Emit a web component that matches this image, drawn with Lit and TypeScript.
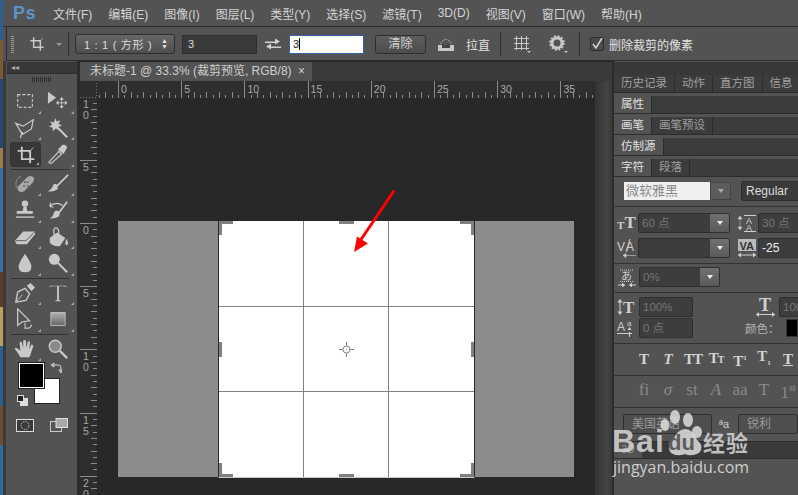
import { LitElement, html, css, svg } from "lit";
import { customElement } from "lit/decorators.js";

const MENU = ["文件(F)","编辑(E)","图像(I)","图层(L)","类型(Y)","选择(S)","滤镜(T)","3D(D)","视图(V)","窗口(W)","帮助(H)"];
const G = "#c9c9c9";
const ic: Record<string, any> = {
  marquee: svg`<rect x="4" y="5" width="16" height="14" fill="none" stroke="${G}" stroke-width="1.2" stroke-dasharray="3.200 2"/>`,
  move: svg`<path d="M1 2 L1 15 L10 8.500Z" fill="${G}"/><path d="M10 14h12M16 8v12" stroke="${G}" stroke-width="1"/><path d="M10 14l2.500-2.500v5zM22 14l-2.500-2.500v5zM16 8l-2.500 2.500h5zM16 20l-2.500-2.500h5z" fill="${G}"/>`,
  lasso: svg`<path d="M2 7 L10 10 L21 3 L19 13 L9 19 Z" fill="none" stroke="${G}" stroke-width="1.300"/><path d="M8 16 Q11 18 8 19 L7 23" fill="none" stroke="${G}" stroke-width="1.300"/>`,
  wand: svg`<path d="M12 12 L22 22" stroke="${G}" stroke-width="2.200"/><path d="M9 1l1.500 4 4-1.500-2 4 4 1.500-4 1.500 1 4-4-2-3 3-.5-4-4-1 3.500-2-2-4 4 1.500z" fill="${G}"/>`,
  crop: svg`<path d="M7 2v15h15M2 7h15v15" fill="none" stroke="${G}" stroke-width="2.200"/><path d="M15 9l6-6" stroke="${G}" stroke-width="1"/>`,
  dropper: svg`<path d="M3 22 L2 21 L13 9 L16 12 L5 22Z" fill="none" stroke="${G}" stroke-width="1.300"/><path d="M12 7 L17 2 Q21 1 22 5 L18 12Z" fill="${G}"/>`,
  heal: svg`<path d="M8 21 Q3 20 4 15 L15 4 Q20 2 22 6 Q22 9 20 11 L11 20Z" fill="#a8a8a8"/><path d="M7 4 Q0 8 3 17" stroke="${G}" stroke-dasharray="1.500 1.500" fill="none"/><circle cx="11" cy="14" r="1" fill="#555"/><circle cx="15" cy="10" r="1" fill="#555"/><circle cx="12" cy="10" r="1" fill="#555"/><circle cx="15" cy="14" r="1" fill="#555"/>`,
  brush: svg`<path d="M23 2 L11 14" stroke="${G}" stroke-width="1.800"/><path d="M10 12 Q13 15 11 18 Q7 21 1 20 Q5 18 6 15 Q7 11 10 12Z" fill="${G}"/>`,
  stamp: svg`<circle cx="12" cy="5" r="3.500" fill="${G}"/><path d="M10.500 8h3l1 5h6v3H3v-3h6.500z" fill="${G}"/><path d="M2 19h20v1.500H2z" fill="${G}"/>`,
  history: svg`<path d="M22 3 L13 15" stroke="${G}" stroke-width="2"/><path d="M12 13 Q15 15 13 19 Q8 22 3 21 Q7 19 7 16 Q9 11 12 13Z" fill="${G}"/><path d="M3 8 Q10 2 17 7M3 8l1-4M3 8l4 1" fill="none" stroke="${G}" stroke-width="1.400"/>`,
  eraser: svg`<path d="M1 16 L10 6 H23 L23 9 L14 20 H3Z" fill="${G}"/><path d="M2 16 H13 L23 6" stroke="#555" fill="none"/>`,
  bucket: svg`<path d="M3 13 L11 7 L20 13 L14 22 Q7 23 3 18Z" fill="${G}"/><path d="M8 10 Q6 2 10 2 Q13 2 13 9" fill="none" stroke="${G}" stroke-width="1.400"/><path d="M21 14 Q25 20 21 21 Q19 20 21 14Z" fill="${G}"/>`,
  drop: svg`<path d="M12 2 Q5 12 5 16 Q5 22 12 22 Q19 22 19 16 Q19 12 12 2Z" fill="${G}"/>`,
  smudge: svg`<circle cx="8" cy="8" r="6" fill="${G}"/><path d="M12 12 L22 22" stroke="${G}" stroke-width="2.200"/>`,
  pen: svg`<path d="M2 22 L4 11 L12 7 L17 13 L13 20Z" fill="none" stroke="${G}" stroke-width="1.500"/><path d="M2 22 L9 14" stroke="${G}"/><path d="M14 4 L18 1 L23 6 L19 10Z" fill="${G}"/>`,
  path: svg`<path d="M4 1 L4 19 L9 15 L17 14Z" fill="none" stroke="${G}" stroke-width="1.400"/><path d="M12 16 v6 h4 q3-1 3-4" fill="none" stroke="${G}" stroke-width="1.200"/>`,
  rect: svg`<defs><linearGradient id="rg" x1="0" y1="0" x2="0" y2="1"><stop offset="0" stop-color="#b0b0b0"/><stop offset="1" stop-color="#666"/></linearGradient></defs><rect x="2.500" y="3.500" width="19" height="17" fill="url(#rg)" stroke="#d0d0d0"/>`,
  hand: svg`<path d="M7 21 Q5 17 1 12 Q1 10 3 11 L7 14 L6 5 Q7 3 8.500 5 L10 11 L10 3 Q12 1.500 13 3 L13.500 11 L15 4 Q17 3 17.500 5 L16.500 12 L19 7 Q21 7 21 9 L18 18 L17 21Z" fill="${G}"/>`,
  zoom: svg`<circle cx="9" cy="9" r="6.500" fill="#8a8a8a" stroke="${G}" stroke-width="1.500"/><path d="M14 14 L22 22" stroke="${G}" stroke-width="2.500"/>`,
  T: svg`<path d="M3 4h18v1.500h-.5q-1-1-2-1H13V19.500l2 .8V21H9v-.7l2-.8V4.500H5.500q-1 0-2 1H3z" fill="${G}"/>`,
};
const icon = (n: string, s = 22) => html`<svg width="${s}" height="${s}" viewBox="0 0 24 24">${ic[n]}</svg>`;
const fa = (body: any) => html`<svg class="fico" width="20" height="20" viewBox="0 0 20 20">${body}</svg>`;
const L = "#cfcfcf";
const FI = {
  size: svg`<text x="0" y="16" class="ft" font-size="11">T</text><text x="7.500" y="15" class="ft" font-size="17">T</text>`,
  lead: svg`<path d="M7 2.500h12M7 18.500h12" stroke="${L}"/><path d="M3 4v11M3 3l-2 3h4zM3 17l-2-3h4z" fill="${L}" stroke="${L}" stroke-width=".5"/><text x="9" y="10.500" class="fs" font-size="9">A</text><text x="9" y="18" class="fs" font-size="9">A</text>`,
  kern: svg`<text x="0" y="13" class="fs" font-size="12">V</text><text x="9" y="13" class="fs" font-size="12">A</text><path d="M9 14 L13 1" stroke="${L}"/><path d="M6 17.500h13M6 17.500l3-2v4z" fill="${L}" stroke="${L}" stroke-width=".6"/>`,
  track: svg`<rect x="1" y="1" width="18" height="12" fill="#bbb"/><text x="2.500" y="11.500" class="fsd" font-size="11">VA</text><path d="M1 17h18" stroke="${L}"/><path d="M1 17l3-2.500v5zM19 17l-3-2.500v5z" fill="${L}"/>`,
  tsume: svg`<path d="M3 3h14M3 14.500h14" stroke="${L}" stroke-dasharray="1 1"/><text x="4" y="13" class="fs" font-size="11">あ</text><path d="M1 18h7M12 18h7" stroke="${L}"/><path d="M8 18l-3-2.500v5zM12 18l3-2.500v5z" fill="${L}"/>`,
  vscale: svg`<text x="6" y="16" class="ft" font-size="17">T</text><path d="M3 3v14" stroke="${L}"/><path d="M3 2l-2.500 3.500h5zM3 18l-2.500-3.500h5z" fill="${L}"/>`,
  base: svg`<text x="0" y="13" class="fs" font-size="12">A</text><text x="10" y="8" class="fs" font-size="8">a</text><path d="M0 15.500h15" stroke="${L}"/><path d="M12.500 19v-5" stroke="${L}"/><path d="M10.500 12h4l-2-3z" fill="${L}"/>`,
  hscale: svg`<text x="3" y="14" class="ft" font-size="18">T</text><path d="M0 17.500h19" stroke="${L}"/><path d="M0 17.500l3-2.500v5zM19 17.500l-3-2.500v5z" fill="${L}"/>`,
};

const HT = [0,5,10,15,20,25,30,35];
const VT: [number,string][] = [[-10,"10"],[-5,"5"],[0,"0"],[5,"5"],[10,"10"],[15,"15"],[20,"20"]];
const U = 12.64;

function hRuler() {
  const t: any[] = [];
  for (let k = 0; k < 90; k++) {
    const x = Math.round(38 + (k - 4) * U / 2) + .5;
    if (x <= 17 || x > 514) continue;
    const m = k - 4;
    if (m % 10 === 0) t.push(svg`<line x1="${x}" x2="${x}" y1="0" y2="17" stroke="#8a8a8a"/>`);
    else t.push(svg`<line x1="${x}" x2="${x}" y1="${m % 2 ? 14 : 11}" y2="17" stroke="#8a8a8a"/>`);
  }
  return svg`${t}${HT.map(n => svg`<text x="${38 + n * U + 3}" y="12" class="rt">${n}</text>`)}
    <path d="M0 16.500h16.500V0" fill="none" stroke="#777" stroke-dasharray="1 2"/>`;
}
function vRuler() {
  const t: any[] = [];
  for (let i = -70; i < 210; i++) {
    const y = Math.round(125 + i * U / 2) + .5;
    if (y < 0 || y > 400) continue;
    if (i % 10 === 0) t.push(svg`<line x1="0" x2="17" y1="${y}" y2="${y}" stroke="#8a8a8a"/>`);
    else t.push(svg`<line x1="${i % 2 ? 13 : 11}" x2="17" y1="${y}" y2="${y}" stroke="#8a8a8a"/>`);
  }
  const labels = VT.map(([u, s]) => {
    const y = 125 + u * U;
    return [...s].map((c, k) => svg`<text x="3" y="${y + 11 + k * 11}" class="rt">${c}</text>`);
  });
  return svg`${t}${labels}`;
}

@customElement("app-root")
export class AppRoot extends LitElement {
  static styles = css`
    :host { display: block; width: 798px; height: 495px; overflow: hidden; position: relative; background: #535353;
      font-family: "Liberation Sans", "Noto Sans CJK SC", sans-serif; color: #d0d0d0; font-size: 12px; }
    * { box-sizing: border-box; }
    .strip { position: absolute; left: 0; top: 0; bottom: 0; width: 3px; z-index: 2;
      background: linear-gradient(#2b5f8f 0 8%, #7a5a36 8% 16%, #23496e 16% 30%, #9a7a4a 30% 34%, #3a6ea0 34% 55%, #5d3b24 55% 62%, #b7a060 62% 70%, #2b5f8f 70% 82%, #704a2a 82% 90%, #326a9e 90%); }
    .app { display: flex; flex-direction: column; height: 100%; padding-left: 3px; }
    .menu { height: 27px; display: flex; align-items: center; border-bottom: 1px solid #2c2c2c; flex: none; }
    .ps { font: bold 18px "Liberation Sans", sans-serif; color: #5e93c9; width: 50px; padding-left: 10px; letter-spacing: .5px; }
    .menu span.m { font-size: 12px; margin-right: 16px; white-space: nowrap; color: #d4d4d4; }
    .opts { height: 34px; flex: none; display: flex; align-items: center; margin-left: 3px; border-bottom: 1px solid #2c2c2c; border-left: 1px solid #2c2c2c; position: relative; padding-top: 1px; }
    .grip { width: 3px; height: 17px; margin-left: 4px; background: repeating-linear-gradient(#999 0 1px, transparent 1px 2px); flex: none; }
    .caret { width: 0; height: 0; border-left: 3px solid transparent; border-right: 3px solid transparent; border-top: 3px solid #9a9a9a; flex: none; }
    .vsep { width: 1px; height: 24px; background: #333; flex: none; }
    .sel { width: 100px; height: 20px; background: linear-gradient(#666, #4e4e4e); border: 1px solid #2e2e2e; border-radius: 3px; display: flex; align-items: center; justify-content: space-between; padding: 0 6px 0 8px; font-size: 11px; letter-spacing: .7px; flex: none; color: #ddd; }
    .updown { font-size: 7px; line-height: 6px; display: flex; flex-direction: column; letter-spacing: 0; }
    .inp { width: 75px; height: 19px; background: #3a3a3a; border: 1px solid #2e2e2e; padding-left: 5px; line-height: 17px; font-size: 11px; flex: none; color: #ddd; }
    .inp.on { background: #fff; border: 1px solid #3660b0; color: #222; padding-left: 3px; }
    .cursor { border-right: 1px solid #000; padding-right: 0; }
    .btn { width: 51px; height: 19px; background: linear-gradient(#5e5e5e, #4c4c4c); border: 1px solid #2e2e2e; border-radius: 3px; text-align: center; line-height: 17px; font-size: 12px; flex: none; }
    .check { width: 14px; height: 14px; background: #4a4a4a; border: 1px solid #2e2e2e; border-radius: 2px; flex: none; display: flex; }
    .label { font-size: 12px; white-space: nowrap; color: #e2e2e2; }
    .main { flex: 1; display: flex; min-height: 0; position: relative; }
    .tools { width: 77px; border-left: 3px solid #3a3a3a; border-right: 3px solid #2c2c2c; flex: none; display: flex; flex-direction: column; background: #535353; padding-left: 1px; }
    .thead { height: 12px; background: #383838; margin-top: 1px; font-size: 8px; color: #aaa; padding-left: 4px; line-height: 11px; border-bottom: 1px solid #2c2c2c; flex: none; }
    .tgrip { width: 19px; height: 5px; margin: 3px 0 6px 25px; background: repeating-linear-gradient(90deg, #2e2e2e 0 1px, transparent 1px 2px); flex: none; }
    .tg { display: grid; grid-template-columns: 33.500px 33.500px; padding-left: 1px; grid-auto-rows: 26.500px; flex: none; }
    .t { display: flex; align-items: center; justify-content: center; position: relative; }
    .t.sel-t { background: #383838; border-radius: 3px; width: 31px; height: 25px; margin: 1px 0 0 2px; border: 1px solid #333; }
    .t::after { content: ""; position: absolute; right: 1px; bottom: 1px; width: 0; height: 0; border-left: 3px solid transparent; border-bottom: 3px solid #a8a8a8; }
    .t.nc::after { display: none; }
    .tsep { height: 1px; background: #333; margin: 1px 8px 1px 4px; flex: none; }
    .colors { position: relative; height: 50px; flex: none; }
    .fg, .bg { position: absolute; }
    .bg { left: 27px; top: 16px; width: 26px; height: 26px; background: #fff; border: 1px solid #222; }
    .fg { left: 12px; top: 1px; width: 25px; height: 25px; background: #000; border: 1px solid #fff; outline: 1px solid #222; }
    .swap { position: absolute; left: 43px; top: 0; }
    .deflt { position: absolute; left: 10px; top: 33px; }
    .modes { display: flex; gap: 16px; padding-left: 9px; margin-top: 6px; align-items: center; flex: none; }
    .doc { flex: 1; display: flex; flex-direction: column; min-width: 0; background: #262626; }
    .tabbar { height: 19px; margin-top: 1px; background: #3a3a3a; flex: none; display: flex; }
    .tab { width: 232px; background: #535353; padding-left: 10px; font-size: 12px; line-height: 19px; color: #cfcfcf; white-space: nowrap; display: flex; justify-content: space-between; padding-right: 7px; }
    .docrow { flex: 1; display: flex; min-height: 0; }
    .stack { width: 515px; flex: none; display: flex; flex-direction: column; min-height: 0; }
    .scroll { flex: 1; background: linear-gradient(90deg, #333, #444 70%, #3a3a3a); border-right: 1px solid #2c2c2c; }
    .rulertop { height: 17px; background: #2e2e2e; flex: none; display: block; width: 515px; }
    .rt { font: 10.500px "Liberation Sans", sans-serif; fill: #a8a8a8; }
    .docbody { flex: 1; display: flex; min-height: 0; }
    .rulerleft { width: 17px; background: #2e2e2e; flex: none; display: block; height: 400px; }
    .canvas { flex: 1; position: relative; background: #282828; overflow: hidden; }
    .gray { position: absolute; left: 21px; top: 123px; width: 456px; height: 256px; background: #8c8c8c; }
    .crop { position: absolute; left: 121px; top: 123px; width: 257px; height: 257px; background: #fff; border-left: 1px solid #2a2a2a; border-right: 1px solid #2a2a2a; border-bottom: 1px solid #c8c8c8; }
    .cv { position: absolute; top: 0; bottom: 0; width: 1px; background: #808080; }
    .ch { position: absolute; left: 0; right: 0; height: 1px; background: #808080; }
    .h { position: absolute; background: #808080; }
    .overlay { position: absolute; left: 0; top: 0; pointer-events: none; }
    .right { width: 186px; flex: none; border-left: 2px solid #2c2c2c; background: #535353; display: flex; flex-direction: column; margin-left: -1px; }
    .rtop { height: 13px; background: #383838; margin-top: 1px; flex: none; }
    .tabs { height: 18px; display: flex; background: #3c3c3c; border-bottom: 1px solid #2c2c2c; flex: none; font-size: 11.500px; line-height: 17px; color: #a0a0a0; margin-bottom: 3px; }
    .tabs span { padding: 0 7px; border-right: 1px solid #2c2c2c; white-space: nowrap; }
    .tabs span.a { background: #535353; color: #e0e0e0; padding: 0 7px; }
    .form { padding-top: 4px; background: #535353; }
    .fr { display: flex; align-items: center; height: 20px; margin-bottom: 5px; padding-left: 3px; white-space: nowrap; }
    .ln { height: 1px; background: #333; flex: none; margin-bottom: 6px; }
    .fi { height: 20px; background: #3d3d3d; border: 1px solid #2e2e2e; border-radius: 2px; display: flex; color: #777; font-size: 11.500px; line-height: 18px; padding-left: 3px; position: relative; flex: none; overflow: hidden; }
    .fi b { position: absolute; right: 0; top: 0; bottom: 0; width: 19px; background: linear-gradient(#707070, #5a5a5a); display: flex; align-items: center; justify-content: center; }
    .fi b i { width: 0; height: 0; border-left: 3.500px solid transparent; border-right: 3.500px solid transparent; border-top: 4px solid #eee; }
    .fico { flex: none; display: block; }
    .ft { font-family: "Liberation Serif", serif; font-weight: bold; fill: #cfcfcf; }
    .fs { font-family: "Liberation Sans", "Noto Sans CJK JP", sans-serif; fill: #cfcfcf; }
    .fsd { font-family: "Liberation Sans", sans-serif; font-weight: bold; fill: #333; }
    .fontsel { display: flex; flex: none; height: 18px; }
    .fontname { width: 86px; background: #f0f0f0; color: #888; font-size: 13px; line-height: 17px; padding-left: 2px; }
    .fontbtn { width: 21px; background: #5c5c5c; border: 1px solid #444; display: flex; align-items: center; justify-content: center; }
    .fontbtn i { width: 0; height: 0; border-left: 3.500px solid transparent; border-right: 3.500px solid transparent; border-top: 4px solid #aaa; }
    .sty { display: flex; height: 16px; align-items: center; padding-left: 22px; gap: 8px; font: bold 15px "Liberation Serif", serif; color: #d4d4d4; white-space: nowrap; }
    .sty span { width: 16px; text-align: center; flex: none; line-height: 16px; }
    .sty small { font-size: 10px; }
    .sty .w { letter-spacing: -1px; }
    .sty.off { color: #8a8a8a; font-weight: normal; font-size: 17px; height: 20px; }
    .stab { height: 18px; background: #3a3a3a; border-top: 1px solid #2c2c2c; border-bottom: 1px solid #2c2c2c; font-size: 10px; line-height: 16px; color: #999; flex: none; margin-top: 7px; }
    .stab span { display: inline-block; width: 28px; height: 16px; background: #535353; text-align: center; }
    .wm { position: absolute; z-index: 3; color: rgba(222,222,222,.82); white-space: nowrap; }
    .wm.bai { left: 612px; top: 423px; font: bold 32px "Liberation Sans", sans-serif; letter-spacing: 1px; }
    .wm.du { left: 668px; top: 430px; font: bold 22px "Liberation Sans", sans-serif; color: #5c5c5c; }
    .wm.jy { left: 703px; top: 425px; font: bold 22px "Noto Sans CJK SC", sans-serif; letter-spacing: 1px; }
    .wm.url { left: 613px; top: 456px; font: 16px "Open Sans", sans-serif; color: rgba(230,230,230,.85); }
    .paw { position: absolute; left: 660px; top: 408px; z-index: 3; }
  `;

  render() {
    return html`
      <div class="strip"></div>
      <div class="app">
        <div class="menu">
          <span class="ps">Ps</span>
          ${MENU.map(m => html`<span class="m">${m}</span>`)}
        </div>
        <div class="opts">
          <div class="grip"></div>
          <span style="margin-left:15px;display:flex">${icon("crop", 16)}</span>
          <span class="caret" style="margin-left:11px"></span>
          <span class="vsep" style="margin-left:6px"></span>
          <div class="sel" style="margin-left:6px"><span>1 : 1 ( 方形 )</span><span class="updown"><span>▲</span><span>▼</span></span></div>
          <div class="inp" style="margin-left:7px">3</div>
          <svg style="margin-left:8px;flex:none" width="16" height="14" viewBox="0 0 16 14"><path d="M0 4.500h10V1.500l5 3-5 3V6H0zM16 9.500H6V6.500l-5 3 5 3V11h10z" fill="#d0d0d0"/></svg>
          <div class="inp on" style="margin-left:8px"><span class="cursor">3</span></div>
          <div class="btn" style="margin-left:11px">清除</div>
          <svg style="margin-left:11px;flex:none" width="18" height="16" viewBox="0 0 18 16"><path d="M1 9h16v6H1z" fill="#c8c8c8"/><path d="M5 9h8v3H5z" fill="#444"/><path d="M3 8Q9 -1 15 8" fill="none" stroke="#c8c8c8" stroke-dasharray="1.500 1"/></svg>
          <span class="label" style="margin-left:11px">拉直</span>
          <span class="vsep" style="margin-left:10px"></span>
          <svg style="margin-left:12px;flex:none" width="18" height="18" viewBox="0 0 18 18"><path d="M3.500 1v14M8.500 1v14M13.500 1v14M1 3.500h15M1 8.500h15M1 13.500h15" stroke="#c8c8c8" fill="none"/><path d="M14 16h4l-2 2z" fill="#c8c8c8"/></svg>
          <svg style="margin-left:18px;flex:none" width="19" height="18" viewBox="0 0 19 18"><circle cx="8" cy="8" r="5" fill="none" stroke="#c8c8c8" stroke-width="3"/><circle cx="8" cy="8" r="6.800" fill="none" stroke="#c8c8c8" stroke-width="2" stroke-dasharray="2 1.600"/><path d="M15 16h4l-2 2z" fill="#c8c8c8"/></svg>
          <span class="vsep" style="margin-left:11px"></span>
          <div class="check" style="margin-left:10px"><svg width="12" height="12" viewBox="0 0 12 12"><path d="M2 6l3 4 6-10" fill="none" stroke="#d8d8d8" stroke-width="1.500"/></svg></div>
          <span class="label" style="margin-left:5px">删除裁剪的像素</span>
        </div>
        <div class="main">
          <div class="tools">
            <div class="thead">◂◂</div>
            <div class="tgrip"></div>
            <div class="tg">
              <div class="t">${icon("marquee")}</div><div class="t">${icon("move")}</div>
              <div class="t">${icon("lasso")}</div><div class="t">${icon("wand")}</div>
              <div class="t sel-t">${icon("crop", 20)}</div><div class="t">${icon("dropper")}</div>
            </div>
            <div class="tsep"></div>
            <div class="tg">
              <div class="t">${icon("heal")}</div><div class="t">${icon("brush")}</div>
              <div class="t">${icon("stamp")}</div><div class="t">${icon("history")}</div>
              <div class="t">${icon("eraser")}</div><div class="t">${icon("bucket")}</div>
              <div class="t">${icon("drop")}</div><div class="t">${icon("smudge")}</div>
            </div>
            <div class="tsep"></div>
            <div class="tg">
              <div class="t">${icon("pen")}</div><div class="t">${icon("T")}</div>
              <div class="t">${icon("path")}</div><div class="t">${icon("rect", 18)}</div>
            </div>
            <div class="tsep"></div>
            <div class="tg">
              <div class="t">${icon("hand")}</div><div class="t nc">${icon("zoom")}</div>
            </div>
            <div class="colors">
              <div class="bg"></div><div class="fg"></div>
              <svg class="swap" width="12" height="12" viewBox="0 0 12 12"><path d="M1 3h7q3 0 3 3v4M1 3l3-2v4zM11 11l-2-3h4z" fill="none" stroke="#d0d0d0"/></svg>
              <svg class="deflt" width="11" height="11" viewBox="0 0 11 11"><rect x="3.500" y="3.500" width="7" height="7" fill="#ddd" stroke="#ddd"/><rect x=".5" y=".5" width="6" height="6" fill="#222" stroke="#ddd"/></svg>
            </div>
            <div class="modes">
              <svg width="18" height="13" viewBox="0 0 18 13"><rect x=".5" y=".5" width="17" height="12" fill="#3a3a3a" stroke="#ddd"/><circle cx="9" cy="6.500" r="4" fill="none" stroke="#ddd" stroke-dasharray="1 1"/></svg>
              <svg width="18" height="14" viewBox="0 0 18 14"><rect x=".5" y="3.500" width="11" height="10" fill="#555" stroke="#ccc"/><rect x="6" y=".5" width="11.500" height="9" fill="#aaa" stroke="#ddd"/></svg>
            </div>
          </div>
          <div class="doc">
            <div class="tabbar"><div class="tab"><span>未标题-1 @ 33.3% (裁剪预览, RGB/8)</span><span>×</span></div></div>
            <div class="docrow">
              <div class="stack">
                <svg class="rulertop" viewBox="0 0 515 17">${hRuler()}</svg>
                <div class="docbody">
                  <svg class="rulerleft" viewBox="0 0 17 400">${vRuler()}</svg>
                  <div class="canvas">
                    <div class="gray"></div>
                    <div class="crop">
                      <div class="cv" style="left:84px"></div><div class="cv" style="left:169px"></div>
                      <div class="ch" style="top:85px"></div><div class="ch" style="top:170px"></div>
                      <div class="h" style="left:0;top:0;width:14px;height:3px"></div>
                      <div class="h" style="left:0;top:0;width:3px;height:14px"></div>
                      <div class="h" style="left:120px;top:0;width:15px;height:3px"></div>
                      <div class="h" style="right:0;top:0;width:14px;height:3px"></div>
                      <div class="h" style="right:0;top:0;width:3px;height:14px"></div>
                      <div class="h" style="left:0;top:121px;width:3px;height:15px"></div>
                      <div class="h" style="right:0;top:121px;width:3px;height:15px"></div>
                      <div class="h" style="left:0;bottom:0;width:14px;height:3px"></div>
                      <div class="h" style="left:0;bottom:0;width:3px;height:14px"></div>
                      <div class="h" style="left:120px;bottom:0;width:15px;height:3px"></div>
                      <div class="h" style="right:0;bottom:0;width:14px;height:3px"></div>
                      <div class="h" style="right:0;bottom:0;width:3px;height:14px"></div>
                      <svg style="position:absolute;left:120px;top:121px" width="15" height="15" viewBox="0 0 15 15"><circle cx="7.500" cy="7.500" r="3.500" fill="none" stroke="#808080"/><path d="M7.500 0v4M7.500 11v4M0 7.500h4M11 7.500h4" stroke="#808080"/><rect x="7" y="7" width="1" height="1" fill="#808080"/></svg>
                    </div>
                    <svg class="overlay" width="498" height="400" viewBox="97 98 498 400"><path d="M393.500 191.500 L358 244" stroke="#f00" stroke-width="3" stroke-linecap="round"/><path d="M354 252 L357 236.500 L368 243.500Z" fill="#f00"/></svg>
                  </div>
                </div>
              </div>
              <div class="scroll"></div>
            </div>
          </div>
          <div class="right">
            <div class="rtop"></div>
            <div class="tabs"><span>历史记录</span><span>动作</span><span>直方图</span><span>信息</span></div>
            <div class="tabs"><span class="a">属性</span></div>
            <div class="tabs"><span class="a">画笔</span><span>画笔预设</span></div>
            <div class="tabs"><span class="a">仿制源</span></div>
            <div class="tabs" style="margin-bottom:0"><span class="a">字符</span><span>段落</span></div>
            <div class="form">
              <div class="fr" style="padding-left:10px">
                <div class="fontsel"><div class="fontname">微软雅黑</div><div class="fontbtn"><i></i></div></div>
                <div class="fi" style="width:60px;margin-left:10px;color:#ddd;background:#3a3a3a;padding-left:4px;font-size:12px">Regular</div>
              </div>
              <div class="ln"></div>
              <div class="fr">
                ${fa(FI.size)}
                <div class="fi" style="width:92px;margin-left:1px">60 点<b><i></i></b></div>
                <span style="margin-left:7px">${fa(FI.lead)}</span>
                <div class="fi" style="width:60px;margin-left:1px">30 点</div>
              </div>
              <div class="fr">
                ${fa(FI.kern)}
                <div class="fi" style="width:92px;margin-left:1px"><b><i></i></b></div>
                <span style="margin-left:7px">${fa(FI.track)}</span>
                <div class="fi" style="width:60px;margin-left:1px;color:#eee;font-size:12px">-25</div>
              </div>
              <div class="ln" style="margin-bottom:3px"></div>
              <div class="fr">
                ${fa(FI.tsume)}
                <div class="fi" style="width:81px;margin-left:2px">0%<b><i></i></b></div>
              </div>
              <div class="ln" style="margin-bottom:4px"></div>
              <div class="fr" style="margin-bottom:1px">
                ${fa(FI.vscale)}
                <div class="fi" style="width:54px;margin-left:2px">100%</div>
                <span style="margin-left:63px">${fa(FI.hscale)}</span>
                <div class="fi" style="width:30px;margin-left:3px">100</div>
              </div>
              <div class="fr">
                ${fa(FI.base)}
                <div class="fi" style="width:54px;margin-left:2px">0 点</div>
                <span style="margin-left:52px;color:#b4b4b4;font-size:11.500px">颜色：</span>
                <div style="width:20px;height:18px;background:#000;margin-left:6px;border:1px solid #333"></div>
              </div>
              <div class="ln" style="margin-bottom:7px"></div>
              <div class="sty"><span>T</span><span style="font-style:italic">T</span><span class="w">TT</span><span class="w">T<small>T</small></span><span>T<sup style="font-size:7px">1</sup></span><span>T<sub style="font-size:7px">1</sub></span><span style="text-decoration:underline">T</span></div>
              <div class="ln" style="margin:8px 0 4px"></div>
              <div class="sty off"><span>fi</span><span style="font-style:italic">σ</span><span>st</span><span style="font-style:italic">A</span><span>aa</span><span>T</span><span>1<sup style="font-size:10px">st</sup></span></div>
              <div class="ln" style="margin:7px 0 6px"></div>
              <div class="fr" style="padding-left:9px;margin-bottom:0">
                <div class="fi" style="width:89px;padding-left:8px;background:#4e4e4e;color:#999;font-size:12px">美国英语</div>
                <span style="margin-left:7px;font-size:11px;width:14px">ªa</span>
                <div class="fi" style="width:60px;margin-left:6px;padding-left:8px;background:#4e4e4e;color:#999;font-size:12px">锐利</div>
              </div>
              <div class="stab"><span>3D</span></div>
            </div>
          </div>
        </div>
      </div>
      <svg class="paw" width="46" height="50" viewBox="0 0 46 50">
        <g fill="rgba(222,222,222,.85)">
          <ellipse cx="5" cy="17" rx="4.500" ry="6"/><ellipse cx="15" cy="9" rx="5" ry="7"/><ellipse cx="28" cy="12" rx="5" ry="7"/><ellipse cx="37" cy="24" rx="5" ry="6"/>
          <path d="M25 21 Q33 21 37 32 Q45 38 39 45 Q31 49 25 46 Q17 49 11 45 Q6 38 13 32 Q18 21 25 21Z"/>
        </g>
      </svg>
      <span class="wm bai">Bai</span><span class="wm du">du</span><span class="wm jy">经验</span><span class="wm url">jingyan.baidu.com</span>
    `;
  }
}
